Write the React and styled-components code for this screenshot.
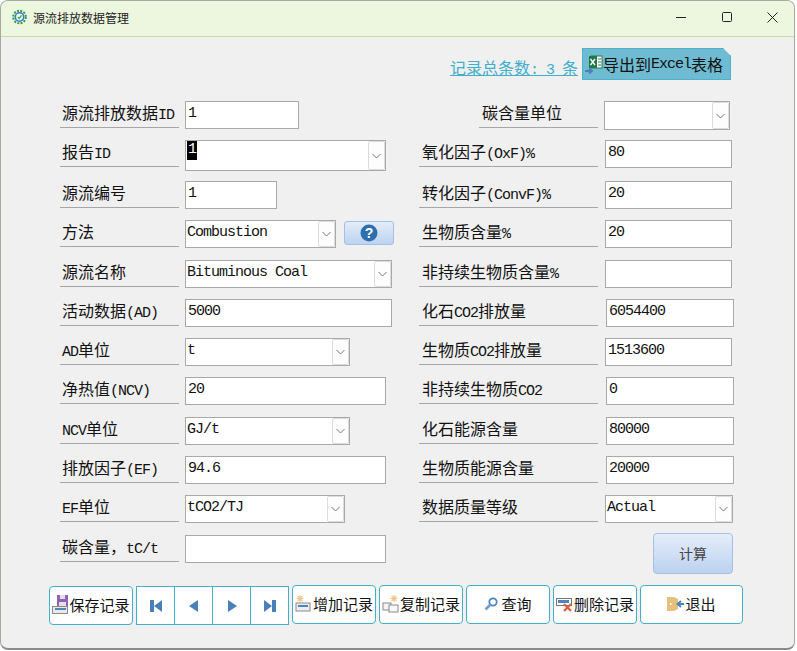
import React from "react";
import styled, { createGlobalStyle } from "styled-components";

const GlobalStyle = createGlobalStyle`
  html, body {
    margin: 0;
    padding: 0;
    background: #fff;
  }
`;

const Win = styled.div`
  box-sizing: border-box;
  width: 795px;
  height: 650px;
  display: flex;
  flex-direction: column;
  background: #f0f0f0;
  border: 1px solid #a8a8a0;
  border-bottom: 2px solid #8c8c8c;
  border-radius: 8px;
  overflow: hidden;
  color: #111;
  font-family: "Noto Sans CJK SC", "Liberation Sans", sans-serif;
  font-size: 16px;
`;
const TitleBar = styled.div`
  flex: none;
  box-sizing: border-box;
  height: 36px;
  display: flex;
  align-items: center;
  padding: 0 0 3px 11px;
  background: #edf7e0;
  border-bottom: 1px solid #c9dca6;
`;
const TitleText = styled.span`
  margin-left: 6px;
  font-size: 12px;
  color: #222;
`;
const Controls = styled.div`
  margin-left: auto;
  display: flex;
  align-items: center;
  margin-right: 16px;
  gap: 34.5px;
  svg { display: block; }
`;
const Body = styled.div`
  flex: 1;
  display: flex;
  flex-direction: column;
  padding: 11px 0 0 48px;
`;
const TopBar = styled.div`
  display: flex;
  justify-content: flex-end;
  align-items: flex-end;
  height: 32px;
  margin-right: 63px;
  gap: 4px;
`;
const RecordLink = styled.a`
  color: #42aecd;
  text-decoration: underline;
  line-height: 20px;
  margin-bottom: -1px;
  white-space: pre;
`;
const ExportButton = styled.div`
  box-sizing: border-box;
  width: 149px;
  height: 32px;
  display: flex;
  align-items: center;
  padding-left: 2px;
  background: #6fbcd2;
  border: 1px solid #4fb0cd;
  clip-path: polygon(0 0, 141px 0, 100% 8px, 100% 100%, 0 100%);
  white-space: pre;
`;
const FormGrid = styled.div`
  display: grid;
  grid-template-columns: 359px 1fr;
  margin: 21px 0 0 11px;
  height: 472px;
`;
const Column = styled.div`
  display: grid;
  grid-template-rows: 39px 41px;
  grid-auto-rows: 39.3px;
`;
const Row = styled.div`
  display: flex;
  align-items: flex-start;
  padding-left: ${({ $indent }) => $indent || 0}px;
`;
const Label = styled.div`
  flex: none;
  box-sizing: border-box;
  width: ${({ $width }) => $width}px;
  height: 27px;
  padding-left: ${({ $pad }) => $pad ?? 2}px;
  margin-right: ${({ $gap }) => $gap ?? 6}px;
  line-height: 23px;
  border-bottom: 1px solid #a6a6a6;
  white-space: pre;
`;
const Latin = styled.span`
  font-family: "Liberation Mono", monospace;
  font-size: 15px;
  letter-spacing: -1px;
`;
const Field = styled.input`
  box-sizing: border-box;
  width: ${({ $width }) => $width}px;
  height: 28px;
  padding: 0 0 3px 2px;
  margin: 0;
  background: #fff;
  border: 1px solid #a9a9a9;
  border-radius: 0;
  outline: none;
  color: #111;
  font-family: "Liberation Mono", monospace;
  font-size: 15px;
  letter-spacing: -1px;
`;
const Combo = styled.div`
  box-sizing: border-box;
  width: ${({ $width }) => $width}px;
  height: ${({ $height }) => $height || 28}px;
  display: flex;
  background: #fff;
  border: 1px solid #a9a9a9;
  font-family: "Liberation Mono", monospace;
  font-size: 15px;
  letter-spacing: -1px;
  line-height: 24px;
`;
const ComboText = styled.div`
  flex: 1;
  padding-left: 1px;
  white-space: pre;
`;
const Selected = styled.span`
  background: #000;
  color: #fff;
  display: block;
  width: fit-content;
  padding: 0 1px;
  height: 19px;
  line-height: 18px;
`;
const ComboArrow = styled.div`
  flex: none;
  box-sizing: border-box;
  width: 17px;
  display: flex;
  align-items: center;
  justify-content: center;
  border: 1px solid #dcdcdc;
  border-radius: 2px;
  background: #fdfdfd;
`;
const HelpButton = styled.div`
  box-sizing: border-box;
  width: 50px;
  height: 24px;
  margin: 1px 0 0 8px;
  display: flex;
  align-items: center;
  justify-content: center;
  background: linear-gradient(#e3edfa, #bcd3f0);
  border: 1px solid #a5c0e4;
  border-radius: 3px;
`;
const CalcButton = styled.div`
  box-sizing: border-box;
  width: 80px;
  height: 41px;
  margin: -2px 0 0 234px;
  display: flex;
  align-items: center;
  justify-content: center;
  background: linear-gradient(#e4edfa, #bcd2f0);
  border: 1px solid #a5c0e4;
  border-radius: 4px;
  color: #444;
  font-size: 14px;
`;
const Toolbar = styled.div`
  display: flex;
  align-items: flex-start;
  gap: 3px;
  margin-top: 12px;
`;
const ToolButton = styled.div`
  box-sizing: border-box;
  width: ${({ $width }) => $width || 84}px;
  height: 39px;
  margin-top: ${({ $top }) => $top || 0}px;
  padding-bottom: 2px;
  display: flex;
  align-items: center;
  justify-content: center;
  background: #fff;
  border: 1px solid #45aecb;
  border-radius: 4px;
  font-size: 15px;
  white-space: pre;
  svg { flex: none; }
`;
const NavGroup = styled.div`
  box-sizing: border-box;
  width: 153px;
  height: 39px;
  margin-top: 1px;
  display: flex;
  background: #fff;
  border: 1px solid #45aecb;
`;
const NavCell = styled.div`
  flex: 1;
  display: flex;
  align-items: center;
  justify-content: center;
  & + & { border-left: 1px solid #45aecb; }
`;

// 标签里的西文用等宽字体，宽度是汉字的一半
const mixed = (text) =>
  text.split(/([\x00-\x7f]+)/).map((part, i) =>
    /[\x00-\x7f]/.test(part) ? <Latin key={i}>{part}</Latin> : part
  );

const Chevron = () => (
  <svg width="9" height="6" viewBox="0 0 9 6">
    <path d="M.5 1 4.500 5 8.500 1" fill="none" stroke="#777" strokeWidth="1" />
  </svg>
);

const GearIcon = () => (
  <svg width="15" height="16" viewBox="0 0 15 16">
    <circle cx="7.500" cy="8" r="6.300" fill="none" stroke="#3a9a45" strokeWidth="2" strokeDasharray="2 1.300" />
    <circle cx="7.500" cy="8" r="4.200" fill="#eef6f4" stroke="#2f7fd0" strokeWidth="1.600" />
    <path d="M5.800 8 7.200 9.400 9.500 6.400" fill="none" stroke="#3fa84a" strokeWidth="1.300" />
  </svg>
);

const ExcelIcon = () => (
  <svg width="18" height="22" viewBox="0 0 18 22">
    <rect x="6" y="3" width="11" height="12" fill="#fff" stroke="#2b7d4a" />
    <rect x="4" y="3" width="8" height="12" fill="#20784a" />
    <path d="M5.500 6 10 12M10 6 5.500 12" stroke="#fff" strokeWidth="1.300" />
    <path d="M13 6h3M13 9h3M13 12h3" stroke="#2b7d4a" />
    <path d="M0 18h6M4 15.500 7 18 4 20.500" fill="none" stroke="#4d7fb8" strokeWidth="2" />
  </svg>
);

const SaveIcon = () => (
  <svg width="17" height="20" viewBox="0 0 17 20">
    <rect x="5" y="0" width="11" height="11" fill="#8f63ad" />
    <rect x="8" y="0" width="5" height="4" fill="#e6dcef" />
    <rect x="7" y="7" width="7" height="4" fill="#e6dcef" />
    <rect x=".5" y="11.500" width="15" height="7" fill="#e8e8e8" stroke="#8a8a8a" />
    <rect x="3" y="13" width="11" height="2" fill="#4d86bd" />
  </svg>
);

const AddIcon = () => (
  <svg width="18" height="20" viewBox="0 0 18 20">
    <path d="M5 1v7M1.500 4.500h7M2.500 2 7.500 7M7.500 2 2.500 7" stroke="#f0c98a" strokeWidth="1.200" />
    <rect x="1" y="9" width="14" height="8" fill="#eee" stroke="#8a8a8a" />
    <rect x="3" y="11" width="10" height="2" fill="#4d86bd" />
  </svg>
);

const CopyIcon = () => (
  <svg width="18" height="20" viewBox="0 0 18 20">
    <path d="M12 1v7M8.500 4.500h7M9.500 2 14.500 7M14.500 2 9.500 7" stroke="#f0c98a" strokeWidth="1.200" />
    <rect x="1" y="9" width="8" height="7" fill="#f4f4f4" stroke="#8a8a8a" />
    <rect x="7" y="11" width="9" height="7" fill="#f8f8f8" stroke="#8a8a8a" />
  </svg>
);

const SearchIcon = () => (
  <svg width="17" height="14" viewBox="0 0 17 14">
    <circle cx="9" cy="5" r="3.700" fill="#fff" stroke="#4d86bd" strokeWidth="1.800" />
    <path d="M6 8 1.500 12.500" stroke="#6f9fcb" strokeWidth="2.600" />
  </svg>
);

const DeleteIcon = () => (
  <svg width="18" height="18" viewBox="0 0 18 18">
    <rect x=".5" y="3.500" width="15" height="7" fill="#fff" stroke="#777" />
    <rect x="2" y="5" width="11" height="3" fill="#4d86bd" />
    <path d="M8 9 15 16M15 9 8 16" stroke="#dd5f3f" strokeWidth="2.200" />
  </svg>
);

const ExitIcon = () => (
  <svg width="18" height="16" viewBox="0 0 18 16">
    <path d="M0 1h7l4 2v10l-4 2H0z" fill="#e8c07d" />
    <rect x="3" y="7" width="1.500" height="2" fill="#fff" />
    <path d="M17 8H11M14 5 10.500 8 14 11" fill="none" stroke="#4d86bd" strokeWidth="2" />
  </svg>
);

const Triangle = ({ d }) => (
  <svg width="14" height="14" viewBox="0 0 14 14">
    <path d={d} fill="#4a80b8" />
  </svg>
);

const leftRows = [
  { label: "源流排放数据ID", kind: "input", width: 114, value: "1" },
  { label: "报告ID", kind: "combo", width: 201, height: 31, value: "1", selected: true },
  { label: "源流编号", kind: "input", width: 92, value: "1" },
  { label: "方法", kind: "combo", width: 151, value: "Combustion", help: true },
  { label: "源流名称", kind: "combo", width: 207, value: "Bituminous Coal" },
  { label: "活动数据(AD)", kind: "input", width: 207, value: "5000" },
  { label: "AD单位", kind: "combo", width: 165, value: "t" },
  { label: "净热值(NCV)", kind: "input", width: 201, value: "20" },
  { label: "NCV单位", kind: "combo", width: 165, value: "GJ/t" },
  { label: "排放因子(EF)", kind: "input", width: 201, value: "94.6" },
  { label: "EF单位", kind: "combo", width: 160, value: "tCO2/TJ" },
  { label: "碳含量，tC/t", kind: "input", width: 201, value: "" },
];

const rightRows = [
  { label: "碳含量单位", kind: "combo", width: 126, height: 29, value: "", short: true },
  { label: "氧化因子(OxF)%", kind: "input", width: 127, value: "80" },
  { label: "转化因子(ConvF)%", kind: "input", width: 127, value: "20" },
  { label: "生物质含量%", kind: "input", width: 127, value: "20" },
  { label: "非持续生物质含量%", kind: "input", width: 127, value: "" },
  { label: "化石CO2排放量", kind: "input", width: 128, wide: true, value: "6054400" },
  { label: "生物质CO2排放量", kind: "input", width: 127, value: "1513600" },
  { label: "非持续生物质CO2", kind: "input", width: 128, wide: true, value: "0" },
  { label: "化石能源含量", kind: "input", width: 128, wide: true, value: "80000" },
  { label: "生物质能源含量", kind: "input", width: 128, wide: true, value: "20000" },
  { label: "数据质量等级", kind: "combo", width: 128, value: "Actual" },
];

const Control = ({ row }) =>
  row.kind === "input" ? (
    <Field $width={row.width} value={row.value} readOnly />
  ) : (
    <Combo $width={row.width} $height={row.height}>
      <ComboText>{row.selected ? <Selected>{row.value}</Selected> : row.value}</ComboText>
      <ComboArrow><Chevron /></ComboArrow>
    </Combo>
  );

const App = () => (
  <Win>
    <GlobalStyle />
    <TitleBar>
      <GearIcon />
      <TitleText>源流排放数据管理</TitleText>
      <Controls>
        <svg width="11" height="11" viewBox="0 0 11 11"><path d="M0 5.500h10" stroke="#222" /></svg>
        <svg width="11" height="11" viewBox="0 0 11 11"><rect x=".5" y=".5" width="9" height="9" rx="1" fill="none" stroke="#222" /></svg>
        <svg width="11" height="11" viewBox="0 0 11 11"><path d="M.5.500l10 10M10.500.500l-10 10" stroke="#222" /></svg>
      </Controls>
    </TitleBar>
    <Body>
      <TopBar>
        <RecordLink>记录总条数<Latin>: 3 </Latin>条</RecordLink>
        <ExportButton><ExcelIcon />导出到<Latin>Excel</Latin>表格</ExportButton>
      </TopBar>
      <FormGrid>
        <Column>
          {leftRows.map((row) => (
            <Row key={row.label}>
              <Label $width={119}>{mixed(row.label)}</Label>
              <Control row={row} />
              {row.help && (
                <HelpButton>
                  <svg width="18" height="18" viewBox="0 0 18 18">
                    <circle cx="9" cy="9" r="8.500" fill="#2f6fae" />
                    <text x="9" y="14" textAnchor="middle" fontSize="14" fontWeight="700" fontFamily="Liberation Sans" fill="#fff">?</text>
                  </svg>
                </HelpButton>
              )}
            </Row>
          ))}
        </Column>
        <Column>
          {rightRows.map((row) =>
            row.short ? (
              <Row key={row.label} $indent={60}>
                <Label $width={119} $pad={3} $gap={6}>{row.label}</Label>
                <Control row={row} />
              </Row>
            ) : (
              <Row key={row.label}>
                <Label $width={179} $pad={3} $gap={row.wide ? 8 : 7}>{mixed(row.label)}</Label>
                <Control row={row} />
              </Row>
            )
          )}
          <CalcButton>计算</CalcButton>
        </Column>
      </FormGrid>
      <Toolbar>
        <ToolButton $top={1}><SaveIcon />保存记录</ToolButton>
        <NavGroup>
          <NavCell><Triangle d="M1 1h4v12H1zM13 1v12L5 7z" /></NavCell>
          <NavCell><Triangle d="M11 1v12L2 7z" /></NavCell>
          <NavCell><Triangle d="M3 1v12l9-6z" /></NavCell>
          <NavCell><Triangle d="M9 1h4v12H9zM1 1v12l8-6z" /></NavCell>
        </NavGroup>
        <ToolButton><AddIcon />增加记录</ToolButton>
        <ToolButton><CopyIcon />复制记录</ToolButton>
        <ToolButton><SearchIcon />查询</ToolButton>
        <ToolButton><DeleteIcon />删除记录</ToolButton>
        <ToolButton $width={103}><ExitIcon />退出</ToolButton>
      </Toolbar>
    </Body>
  </Win>
);

export default App;
